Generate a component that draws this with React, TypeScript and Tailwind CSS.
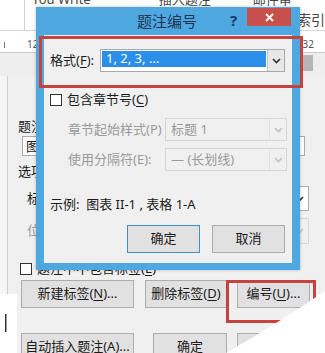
import React from 'react';

const font = "font-['Noto_Sans','Noto_Sans_CJK_SC',sans-serif]";

function Chevron({ color = '#333' }: { color?: string }) {
  return (
    <svg width="9" height="6" viewBox="0 0 9 6">
      <path d="M1 1 L4.5 4.5 L8 1" fill="none" stroke={color} strokeWidth="1.6" />
    </svg>
  );
}

function Select({
  text,
  disabled,
  width,
  height = 23,
}: {
  text: string;
  disabled?: boolean;
  width: number;
  height?: number;
}) {
  return (
    <div
      className={`flex border ${disabled ? 'border-[#d6d6d6] bg-[#f0f0f0]' : 'border-[#a9a9a9] bg-white'}`}
      style={{ width, height }}
    >
      <div className={`flex-1 flex items-center px-[5px] text-[13px] ${disabled ? 'text-[#9a9a9a]' : 'text-black'}`}>
        {text}
      </div>
      <div
        className={`w-[17px] flex items-center justify-center border-l ${disabled ? 'border-[#e2e2e2]' : 'border-[#c4c4c4] bg-[#e8e8e8]'}`}
      >
        <Chevron color={disabled ? '#c2c2c2' : '#3a3a3a'} />
      </div>
    </div>
  );
}

function Btn({ label, w, primary }: { label: React.ReactNode; w: number; primary?: boolean }) {
  return (
    <div
      className={`h-[28px] flex items-center justify-center text-[13px] text-[#1a1a1a] bg-[#e1e1e1] border ${primary ? 'border-[#3d8fd4]' : 'border-[#adadad]'}`}
      style={{ width: w }}
    >
      {label}
    </div>
  );
}

function U({ c }: { c: string }) {
  return <span className="underline underline-offset-2">{c}</span>;
}

export default function App() {
  return (
    <div className={`relative w-[325px] h-[353px] overflow-hidden bg-white ${font}`}>
      {/* Word window behind */}
      <div className="flex flex-col h-full">
        <div className="h-[35px] flex border-b border-[#d6d6d6]">
          <div className="w-[33px] border-r border-[#d0d0d0]" />
          <div className="flex-1 flex flex-col">
            <div className="h-[7px] overflow-hidden flex text-[13px] text-[#444] leading-[16px] whitespace-nowrap">
              <span className="-mt-[9px] ml-[7px]">You Write</span>
              <span className="-mt-[9px] ml-[68px]">插入题注</span>
              <span className="-mt-[9px] ml-[42px]">邮件审</span>
            </div>
            <div className="flex-1 flex items-center pl-[272px] text-[14px] text-[#444] whitespace-nowrap pt-[2px]">
              索引
            </div>
          </div>
        </div>
        <div className="h-[25px] flex items-center text-[10px] text-[#555] border-b border-[#c8c8c8] pt-[6px]">
          <div className="w-[1px] h-[6px] bg-[#777] ml-[4px]" />
          <span className="ml-[22px]">12</span>
          <span className="ml-[264px]">32</span>
        </div>
        <div className="flex-1 flex flex-col bg-[#eeeeee]">
          <div className="h-[23px] flex justify-end pr-[12px] pt-[2px] pb-[5px]">
            <div className="w-[13px] bg-[#b5b5b5]" />
          </div>
          <div className="flex-1 flex">
            <div className="w-[7px] bg-[#f6f6f6]" />
            <div className="flex-1 border-l border-[#cfcfcf] bg-[#f0f0f0] pl-[10px] flex flex-col text-[13px] text-[#1a1a1a]">
              <div className="h-[16px] mt-[42px] leading-[16px]">题注(C):</div>
              <div className="h-[20px] mt-[2px] ml-[4px] w-[283px] border border-[#a9a9a9] bg-white flex items-center px-[3px] leading-none">
                图表
              </div>
              <div className="h-[16px] mt-[7px] leading-[16px]">选项</div>
              <div className="h-[25px] mt-[7px] flex items-center pl-[9px]">
                <span className="w-[63px]">标签(L):</span>
                <div className="w-[219px] h-[25px] border border-[#adadad] bg-white flex justify-end items-center pr-[4px]">
                  <Chevron />
                </div>
              </div>
              <div className="h-[26px] mt-[7px] flex items-center pl-[9px] text-[#9a9a9a]">
                <span className="w-[63px]">位置(P):</span>
                <div className="w-[219px] h-[26px] border border-[#d6d6d6] flex justify-end items-center pr-[4px]">
                  <Chevron color="#c2c2c2" />
                </div>
              </div>
              <div className="h-[16px] mt-[17px] flex items-center gap-[5px] pl-[2px]">
                <div className="w-[12px] h-[12px] border border-[#333] bg-white" />
                <span className="whitespace-nowrap">
                  题注中不包含标签(<U c="E" />)
                </span>
              </div>
              <div className="mt-[3px] flex pl-[3px]">
                <Btn w={113} label={<>新建标签(<U c="N" />)...</>} />
                <div className="w-[11px]" />
                <Btn w={82} label={<>删除标签(<U c="D" />)</>} />
                <div className="w-[10px]" />
                <Btn w={73} label={<>编号(<U c="U" />)...</>} />
              </div>
              <div className="mt-[25px] flex pl-[3px]">
                <Btn w={113} label={<>自动插入题注(A)...</>} />
                <div className="w-[19px]" />
                <Btn w={74} label="确定" />
                <div className="w-[10px]" />
                <Btn w={73} label="关闭" />
              </div>
            </div>
          </div>
        </div>
      </div>

      {/* 题注编号 dialog */}
      <div className="absolute left-[36px] top-[7px] w-[264px] h-[263px] bg-[#4fa7e0] flex flex-col shadow-[0_0_3px_rgba(0,0,0,0.25)]">
        <div className="h-[28px] flex items-start">
          <div className="ml-[101px] mt-[4px] text-[15px] leading-[20px] text-[#1d3553]">题注编号</div>
          <div className="ml-[33px] mt-[3px] text-[15px] font-bold leading-[20px] text-[#1b3a66]">?</div>
          <div className="ml-[10px] mt-[1px] w-[44px] h-[18px] bg-[#c8504a] flex items-center justify-center">
            <svg width="9" height="9" viewBox="0 0 9 9">
              <path d="M1 1 L8 8 M8 1 L1 8" stroke="white" strokeWidth="1.8" />
            </svg>
          </div>
        </div>
        <div className="flex-1 mx-[8px] mb-[7px] bg-[#f0f0f0] flex flex-col text-[13px] text-[#1a1a1a] pt-[14px]">
          <div className="h-[23px] flex items-center">
            <span className="ml-[6px] w-[50px]">
              格式(<U c="F" />):
            </span>
            <div className="w-[185px] h-[23px] border border-[#a9a9a9] bg-white flex">
              <div className="flex-1 pt-[1px] pl-[1px] pr-[1px] pb-[4px]">
                <div className="h-full bg-[#2b8ee8] text-white flex items-center pl-[4px] text-[13px]">1, 2, 3, …</div>
              </div>
              <div className="w-[17px] flex items-center justify-center border-l border-[#c4c4c4] bg-[#e8e8e8]">
                <Chevron />
              </div>
            </div>
          </div>
          <div className="h-[16px] mt-[20px] flex items-center gap-[5px] ml-[6px]">
            <div className="w-[12px] h-[12px] border border-[#333] bg-white" />
            <span>
              包含章节号(<U c="C" />)
            </span>
          </div>
          <div className="h-[23px] mt-[10px] flex items-center text-[#9a9a9a]">
            <span className="ml-[24px] w-[97px]">章节起始样式(P)</span>
            <Select disabled text="标题 1" width={122} />
          </div>
          <div className="h-[23px] mt-[7px] flex items-center text-[#9a9a9a]">
            <span className="ml-[24px] w-[97px]">使用分隔符(E):</span>
            <Select disabled text="— (长划线)" width={122} />
          </div>
          <div className="h-[16px] mt-[26px] ml-[6px] flex items-center whitespace-nowrap">示例:&nbsp; 图表 II-1 , 表格 1-A</div>
          <div className="mt-[12px] flex">
            <div className="ml-[83px]">
              <Btn w={73} label="确定" primary />
            </div>
            <div className="ml-[12px]">
              <Btn w={73} label="取消" />
            </div>
          </div>
        </div>
      </div>

      {/* red highlight boxes */}
      <div className="absolute left-[39px] top-[36px] w-[264px] h-[52px] border-[3px] border-[#c6423d]" />
      <div className="absolute left-[226px] top-[280px] w-[90px] h-[43px] border-[3px] border-[#c6423d]" />

      {/* page curl */}
      <svg className="absolute left-0 top-0" width="325" height="353" viewBox="0 0 325 353">
        <defs>
          <linearGradient id="curl" x1="0" y1="0" x2="1" y2="1">
            <stop offset="0" stopColor="#d9d9d9" />
            <stop offset="0.25" stopColor="#ffffff" />
            <stop offset="1" stopColor="#ffffff" />
          </linearGradient>
        </defs>
        <path d="M325 291 Q280 322 226 353 L325 353 Z" fill="url(#curl)" />
        <rect x="0" y="294" width="17" height="59" fill="#ffffff" />
        <rect x="5" y="314" width="1.5" height="18" fill="#333" />
      </svg>
    </div>
  );
}
